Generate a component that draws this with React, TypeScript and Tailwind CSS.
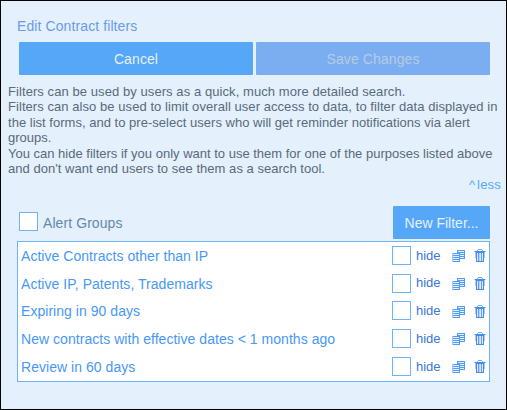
import clsx from "clsx";

const description = [
    { text: "Filters can be used by users as a quick, much more detailed search.", tracking: "tracking-[0.075px]" },
    { text: "Filters can also be used to limit overall user access to data, to filter data displayed in", tracking: "tracking-[0.06px]" },
    { text: "the list forms, and to pre-select users who will get reminder notifications via alert", tracking: "tracking-[0.02px]" },
    { text: "groups.", tracking: "tracking-[0.02px]" },
    { text: "You can hide filters if you only want to use them for one of the purposes listed above", tracking: "tracking-[0px]" },
    { text: "and don't want end users to see them as a search tool.", tracking: "tracking-[0.03px]" },
];

const filters = [
    "Active Contracts other than IP",
    "Active IP, Patents, Trademarks",
    "Expiring in 90 days",
    "New contracts with effective dates < 1 months ago",
    "Review in 60 days",
];

const CopyIcon = () => (
    <svg className="mt-[1.4px]" width="13" height="12" viewBox="0 0 13 12" shapeRendering="crispEdges">
        <path d="M5 0h8v9H5z" fill="#e3effe" />
        <path d="M5 0h8v1H5zM5 2h8v1H5zM8 4h5v1H8zM8 6h5v1H8zM8 8h5v1H8zM12 0h1v9h-1zM5 0h1v3H5z" fill="#4f9df5" />
        <path d="M0 3h8v9H0z" fill="#e3effe" />
        <path d="M0 3h8v1H0zM0 5h8v1H0zM0 7h8v1H0zM0 9h8v1H0zM0 11h8v1H0zM7 3h1v9H7z" fill="#4f9df5" />
        <path d="M0 3h1v9H0z" fill="#b9bdf6" />
    </svg>
);

const TrashIcon = () => (
    <svg width="12" height="14" viewBox="0 0 12 14" shapeRendering="crispEdges">
        <path d="M2 4h8v9H2z" fill="#e0e6fc" />
        <path d="M4 1h4v1H4zM3 2h1v1H3zM8 2h1v1H8z" fill="#6fb0f8" />
        <path d="M1 3h10v1H1zM2 4h8v1H2zM2 5h1v8H2zM9 5h1v8H9zM2 13h8v1H2z" fill="#3f8ef0" />
        <path d="M0 3h1v1H0zM11 3h1v1h-1zM1 4h1v6H1zM10 4h1v6h-1z" fill="#a9c8fa" />
        <path d="M4 5h1v8H4zM7 5h1v8H7z" fill="#5ba3f6" />
        <path d="M5 5h1v8H5z" fill="#cfc4f3" />
    </svg>
);

const Checkbox = ({ className }: { className?: string }) => (
    <span role="checkbox" aria-checked="false" className={clsx("block size-[19px] shrink-0 border border-[#6db3fa] bg-white", className)} />
);

const FilterRow = ({ name }: { name: string }) => (
    <div className="flex h-[27.75px] items-center">
        <a className="mt-[1.1px] grow whitespace-nowrap text-[14px] leading-4 tracking-[0.04px] text-[#4797f7]">{name}</a>
        <Checkbox />
        <span className="ml-[5px] mt-[0.6px] w-9 text-[13px] leading-4 text-[#3c76d8]">hide</span>
        <CopyIcon />
        <span className="mb-[0.8px] ml-[9px]">
            <TrashIcon />
        </span>
    </div>
);

const App = () => {
    return (
        <div className="h-[410px] w-[507px] overflow-hidden border border-black bg-[#e4f0fc] font-['Liberation_Sans',Arial,sans-serif]">
            <h1 className="ml-4 mt-[17px] text-[14px] leading-4 tracking-[0.1px] text-[#6c9bea]">Edit Contract filters</h1>
            <div className="ml-[18px] mt-2 flex gap-[3px] text-[14px] tracking-[0.1px]">
                <button className="h-[33px] w-[234px] rounded-[1px] bg-[#57a7f9] pt-px text-[#e4f0fc]">Cancel</button>
                <button className="h-[33px] w-[234px] rounded-[1px] bg-[#7baef0] pt-px text-[#b5cce3]" disabled>Save Changes</button>
            </div>
            <div className="ml-[7px] mt-[9px] text-[13px] leading-[15.4px] text-[#596a7b]">
                {description.map((line) => (
                    <p key={line.text} className={clsx("whitespace-nowrap", line.tracking)}>{line.text}</p>
                ))}
            </div>
            <div className="mr-[5px] flex h-4 items-center justify-end text-[13px] text-[#57a7f9]">
                <a className="tracking-[0.2px]"><span className="tracking-[2px]">^</span>less</a>
            </div>
            <div className="ml-[18px] mr-4 mt-[14px] flex h-[33px]">
                <Checkbox className="mt-[6px]" />
                <span className="ml-[5px] mt-[9px] grow text-[14px] leading-4 tracking-[0.08px] text-[#6389a8]">Alert Groups</span>
                <button className="h-[33px] w-[97px] rounded-[1px] bg-[#57a7f9] pt-px text-[14px] text-[#e4f0fc]">New Filter...</button>
            </div>
            <div className="ml-4 mt-[2px] h-[141px] w-[473px] border border-[#6db3fa] bg-white px-[3px]">
                <div className="-mt-[0.9px]">
                    {filters.map((name) => (
                        <FilterRow key={name} name={name} />
                    ))}
                </div>
            </div>
        </div>
    );
};

export default App;
